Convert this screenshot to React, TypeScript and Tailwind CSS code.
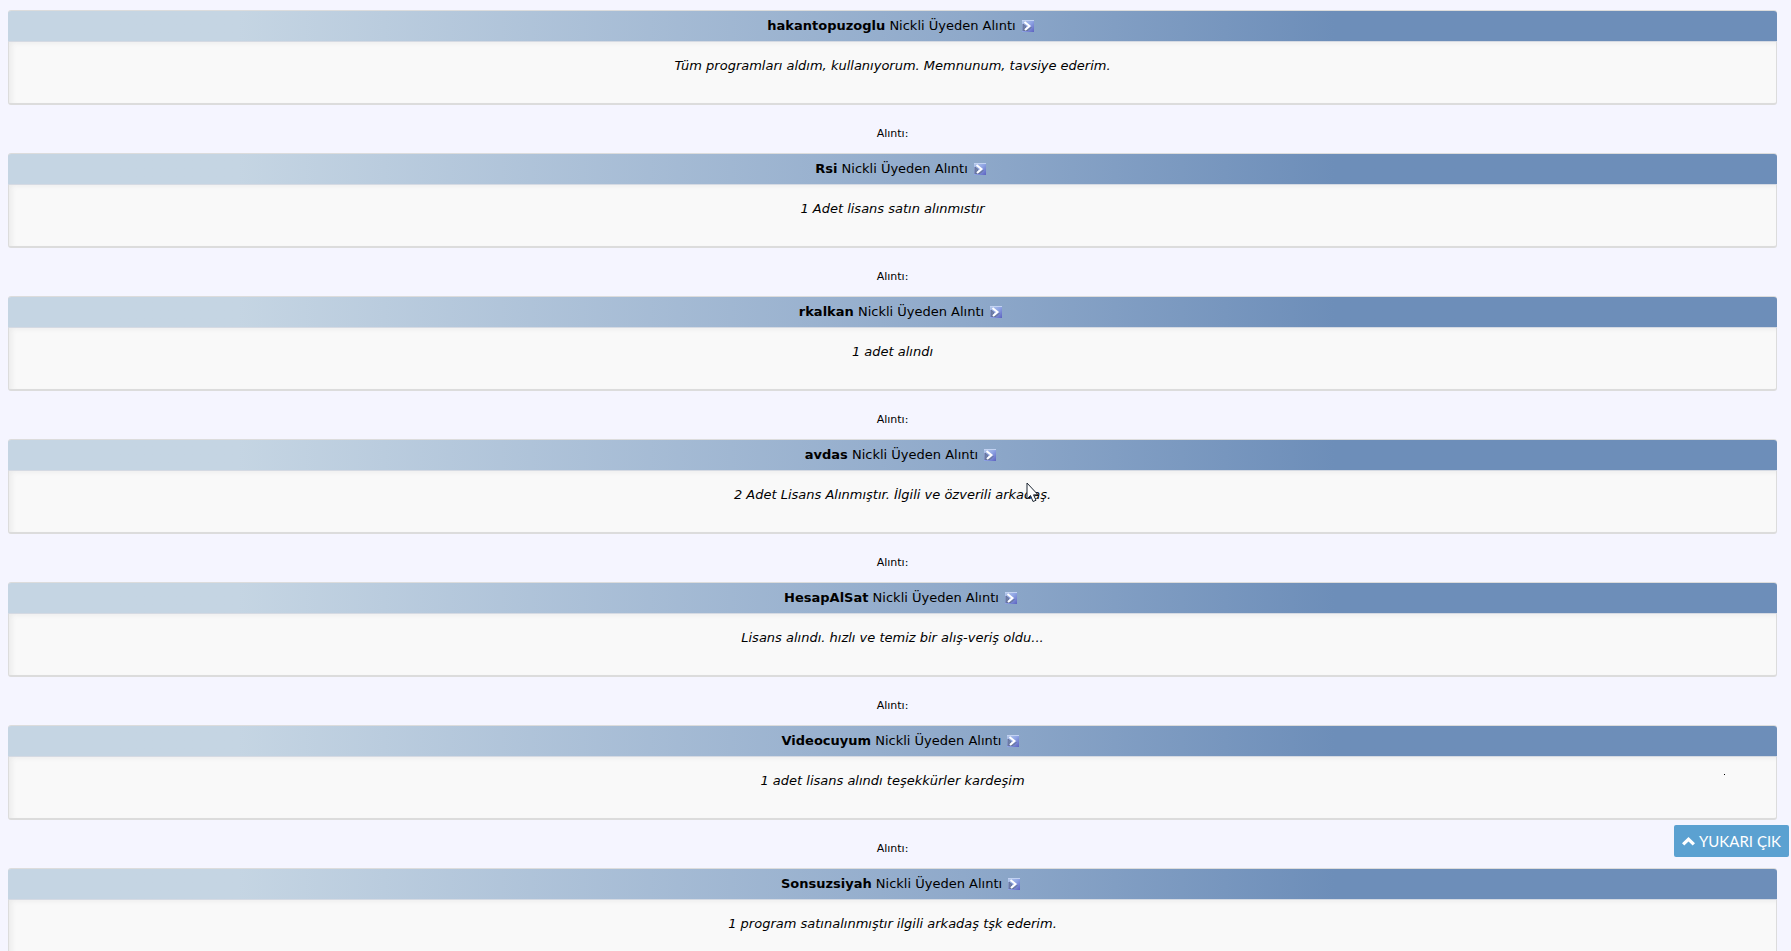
import React from 'react';

interface Quote {
  author: string;
  message: string;
}

const quotes: Quote[] = [
  { author: 'hakantopuzoglu', message: 'Tüm programları aldım, kullanıyorum. Memnunum, tavsiye ederim.' },
  { author: 'Rsi', message: '1 Adet lisans satın alınmıstır' },
  { author: 'rkalkan', message: '1 adet alındı' },
  { author: 'avdas', message: '2 Adet Lisans Alınmıştır. İlgili ve özverili arkadaş.' },
  { author: 'HesapAlSat', message: 'Lisans alındı. hızlı ve temiz bir alış-veriş oldu...' },
  { author: 'Videocuyum', message: '1 adet lisans alındı teşekkürler kardeşim' },
  { author: 'Sonsuzsiyah', message: '1 program satınalınmıştır ilgili arkadaş tşk ederim.' }
];

function ViewPostIcon() {
  return (
    <svg width="12" height="12" viewBox="0 0 12 12" aria-hidden="true">
      <defs>
        <linearGradient id="viewPost" x1="0" y1="0" x2="1" y2="1">
          <stop offset="0" stopColor="#b9cdec" />
          <stop offset="0.5" stopColor="#8fa4e4" />
          <stop offset="1" stopColor="#5c62c0" />
        </linearGradient>
      </defs>
      <rect width="12" height="12" fill="url(#viewPost)" />
      <path d="M0 .5h12" stroke="#c2d2f2" />
      <path d="M1 11V4l3 2.500L1.500 10.500H6L9.500 7" fill="#7182ab" stroke="#66739c" />
      <path d="M2.500 2L7.500 6 3 10" fill="none" stroke="#fff" strokeWidth="2" />
    </svg>
  );
}

function QuoteBox({ author, message }: Quote) {
  return (
    <blockquote className="rounded-[3px] border border-b-2 border-[#dcdcdc] bg-[#f9f9f9]">
      <div className="-mx-px flex h-[31px] items-center justify-center gap-1.5 rounded-t-[3px] border-b border-[#d5dae3] bg-linear-to-r from-[#c5d5e3] from-13% via-[#8fa9ca] via-54% to-[#6d8eb9] to-75% pl-4">
        <span>
          <strong>{author}</strong> Nickli Üyeden Alıntı
        </span>
        <a href="#post" aria-label="Mesajı görüntüle">
          <ViewPostIcon />
        </a>
      </div>
      <p className="h-[61px] pt-3.5 text-center italic shadow-[inset_4px_2px_5px_-1px_#ececec]">{message}</p>
    </blockquote>
  );
}

// Mouse pointer resting over the quotes
function Pointer() {
  return (
    <svg className="absolute top-[482px] left-[1026px]" width="14" height="22" viewBox="0 0 14 22" aria-hidden="true">
      <path
        d="M1 1v16l3.500-3.500L7 19.500l3-1.200-2.500-5.500H12z"
        fill="#fff"
        stroke="#1d2733"
      />
    </svg>
  );
}

export default function App() {
  return (
    <main className="relative h-screen overflow-hidden bg-[#f5f5ff] pt-[10px] pr-[14px] pl-2 font-['DejaVu_Sans',sans-serif] text-[13px] leading-5 text-black">
      {quotes.map((quote, index) => (
        <section key={quote.author}>
          {index > 0 && (
            <h2 className="flex h-12 items-center justify-center pt-2.5 text-[11px]">Alıntı:</h2>
          )}
          <QuoteBox {...quote} />
        </section>
      ))}

      <Pointer />
      <span className="absolute top-[774px] left-[1724px] size-px bg-black" />

      <button
        type="button"
        className="fixed right-[2px] bottom-[94px] flex h-8 w-[115px] items-center justify-center gap-1 rounded-[2px] bg-[#5ba1d1] font-[family-name:Lato] text-[15px] text-white"
      >
        <svg width="13" height="10" viewBox="0 0 13 10" aria-hidden="true">
          <path d="M6.500 1L13 7.300 10.700 9.500 6.500 5.400 2.300 9.500 0 7.300z" fill="currentColor" />
        </svg>
        YUKARI ÇIK
      </button>
    </main>
  );
}
